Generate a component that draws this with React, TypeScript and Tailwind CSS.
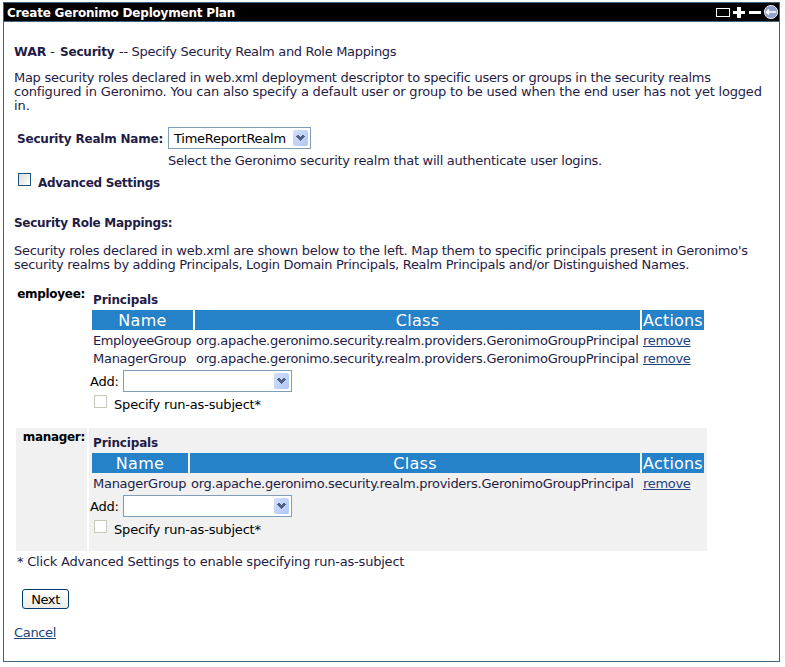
import type { ReactNode } from "react";

function Arrow() {
  return (
    <span className="flex h-4 w-[15px] items-center justify-center rounded-[2px] bg-linear-to-br from-[#d3e0fc] to-[#afc6f5]">
      <svg width="9" height="6" viewBox="0 0 9 6" shapeRendering="crispEdges">
        <path d="M1 0h2v1h1v1h1v-1h1v-1h2v1h1v1h-1v1h-1v1h-1v1h-1v1h-1v-1h-1v-1h-1v-1h-1v-1h-1v-1h1z" fill="#4d6185" />
      </svg>
    </span>
  );
}

function Select({ value, className }: { value?: string; className: string }) {
  return (
    <div className={`flex h-[22px] items-center justify-between border border-[#7f9db9] bg-white pr-[2px] pl-[5px] text-black ${className}`}>
      <span className="pt-px text-[13px] tracking-[-0.25px]">{value}</span>
      <Arrow />
    </div>
  );
}

function Th({ children, className }: { children: ReactNode; className?: string }) {
  return (
    <div className={`flex h-5 shrink-0 items-center justify-center bg-[#2581c8] pt-px text-[16px] leading-5 text-white ${className}`}>
      {children}
    </div>
  );
}

type Group = { name: string; spacing: string };

function Role({ name, groups, nameWidth, classWidth, className, fill }: {
  name: string;
  groups: Group[];
  nameWidth: string;
  classWidth: string;
  className: string;
  fill: string;
}) {
  return (
    <div className={`flex w-[691px] gap-[2px] ${className}`}>
      <div className={`w-[71px] pt-[2px] pr-[2px] text-right text-[12px] leading-[14px] font-bold tracking-[-0.3px] text-black ${fill}`}>{name}</div>
      <div className={`flex-1 pt-2 pl-[3px] ${fill}`}>
        <div className="h-[17px] pl-px text-[12px] leading-[15px] font-bold tracking-[-0.15px]">Principals</div>
        <div className="flex w-[612px] gap-[2px]">
          <Th className={`tracking-[0.3px] ${nameWidth}`}>Name</Th>
          <Th className={`tracking-[0.3px] ${classWidth}`}>Class</Th>
          <Th className="w-[62px] tracking-[0.2px]">Actions</Th>
        </div>
        <div className="pt-[2px]">
          {groups.map((g) => (
            <div key={g.name} className="flex h-[18px] w-[612px] gap-[2px] leading-[18px]">
              <div className={`shrink-0 pl-px ${g.spacing} ${nameWidth}`}>{g.name}</div>
              <div className={`shrink-0 pl-px tracking-[-0.29px] ${classWidth}`}>org.apache.geronimo.security.realm.providers.GeronimoGroupPrincipal</div>
              <div className="w-[62px] shrink-0 pl-px tracking-[-0.3px]"><a className="text-[#21437c] underline">remove</a></div>
            </div>
          ))}
        </div>
        <div className="mt-[2px] -ml-[2px] flex h-[22px] items-center text-black">
          <span className="w-[33px] pt-px tracking-[-0.25px]">Add:</span>
          <Select className="w-[169px]" />
        </div>
        <div className="flex h-[19px] pt-[3px] pl-[2px] text-black">
          <span className="h-[13px] w-[13px] border border-[#cac8bb] bg-white" />
          <span className="ml-[7px] pt-px leading-[18px] tracking-[-0.18px]">Specify run-as-subject*</span>
        </div>
      </div>
    </div>
  );
}

export default function App() {
  return (
    <div className="h-[667px] w-[785px] overflow-hidden bg-white pt-[2px] pl-[3px] font-['Verdana','DejaVu_Sans',sans-serif] text-[13px] leading-[14px] whitespace-nowrap text-[#1f1c46]">
      <div className="h-[660px] w-[777px] border border-[#3f6380]">
        <div className="flex h-[19px] items-center justify-between border-b border-[#3f6380] bg-black pl-[3px]">
          <span className="pt-px text-[12px] font-bold tracking-[-0.2px] text-white">Create Geronimo Deployment Plan</span>
          <svg width="64" height="16" viewBox="715 3 64 16">
            <g shapeRendering="crispEdges">
              <path d="M716.5 7.5h13v8h-13z" fill="none" stroke="#fff" />
              <path d="M733 10h4v-4h4v4h4v3h-4v4h-4v-4h-4zM749 10h12v3h-12z" fill="#fff" />
            </g>
            <circle cx="771" cy="11" r="6.6" fill="#93a3c9" stroke="#dfe5f3" />
            <path d="M766 11h10M769 8.5L766.5 11l2.500 2.500" fill="none" stroke="#fff" strokeWidth="1.600" />
          </svg>
        </div>

        <div className="pl-[10px]">
          <div className="mt-[23px] flex h-[14px]">
            <b className="w-[36px] text-[12.5px] tracking-[-0.1px]">WAR</b>
            <span className="w-[10px]">-</span>
            <b className="w-[59px] text-[12px] tracking-[-0.2px]">Security</b>
            <span className="tracking-[-0.31px]">-- Specify Security Realm and Role Mappings</span>
          </div>
          <div className="mt-[12px] h-[42px]">
            <p className="tracking-[-0.28px]">Map security roles declared in web.xml deployment descriptor to specific users or groups in the security realms</p>
            <p className="tracking-[-0.19px]">configured in Geronimo. You can also specify a default user or group to be used when the end user has not yet logged</p>
            <p>in.</p>
          </div>

          <div className="mt-[14px] flex h-[22px] items-center pl-[3px]">
            <b className="w-[151px] pt-px text-[12px] tracking-[-0.2px]">Security Realm Name:</b>
            <Select value="TimeReportRealm" className="w-[143px]" />
          </div>
          <div className="mt-[5px] pl-[154px] tracking-[-0.27px]">Select the Geronimo security realm that will authenticate user logins.</div>
          <div className="mt-[5px] flex h-[17px] pl-1">
            <span className="h-[13px] w-[13px] border border-[#1c5180] bg-linear-to-br from-[#dcdcd7] to-white" />
            <b className="ml-[7px] pt-[3px] text-[12px] tracking-[-0.3px]">Advanced Settings</b>
          </div>
          <div className="mt-[26px] text-[12px] font-bold tracking-[-0.27px]">Security Role Mappings:</div>
          <div className="mt-[14px] h-7">
            <p className="tracking-[-0.265px]">Security roles declared in web.xml are shown below to the left. Map them to specific principals present in Geronimo's</p>
            <p className="tracking-[-0.3px]">security realms by adding Principals, Login Domain Principals, Realm Principals and/or Distinguished Names.</p>
          </div>
          <div className="mt-[13px] pl-[2px]">
            <Role
              name="employee:"
              groups={[
                { name: "EmployeeGroup", spacing: "tracking-[-0.45px]" },
                { name: "ManagerGroup", spacing: "tracking-[-0.27px]" },
              ]}
              nameWidth="w-[101px]"
              classWidth="w-[445px]"
              className="h-[141px]"
              fill="bg-white"
            />
            <Role
              name="manager:"
              groups={[{ name: "ManagerGroup", spacing: "tracking-[-0.27px]" }]}
              nameWidth="w-[96px]"
              classWidth="w-[450px]"
              className="mt-[2px] h-[123px]"
              fill="bg-[#f1f1f1]"
            />
          </div>
          <div className="mt-[4px] pl-[3px] tracking-[-0.21px]">* Click Advanced Settings to enable specifying run-as-subject</div>
          <button className="mt-5 ml-2 flex h-5 w-[47px] items-center justify-center rounded-[3px] border border-[#003c74] bg-linear-to-b from-white to-[#ecebe5] pt-px text-[13px] tracking-[-0.4px] text-black">Next</button>
          <div className="mt-[17px] tracking-[-0.33px]"><a className="text-[#21437c] underline">Cancel</a></div>
        </div>
      </div>
    </div>
  );
}
